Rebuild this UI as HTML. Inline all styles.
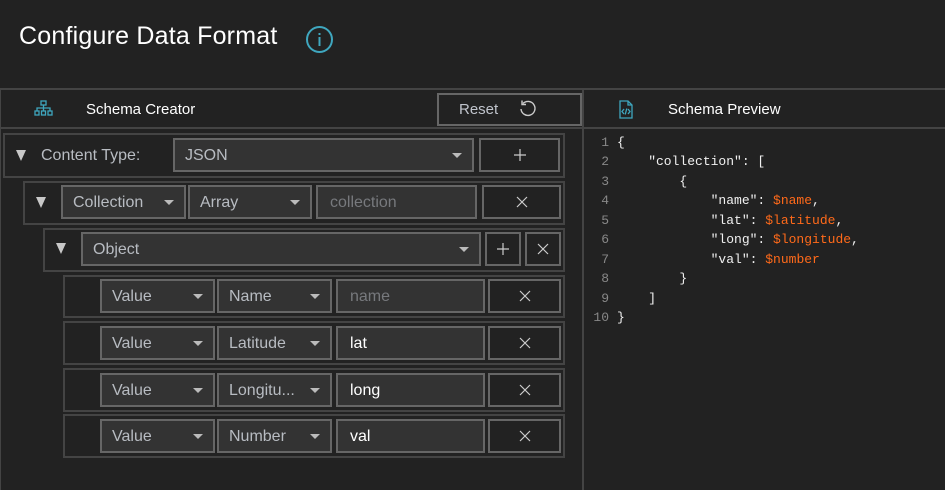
<!DOCTYPE html>
<html><head><meta charset="utf-8"><style>
*{box-sizing:border-box;margin:0;padding:0}
body{width:945px;height:490px;background:#222;overflow:hidden;position:relative;font-family:"Liberation Sans",sans-serif;color:#c4c8cc}
.a{position:absolute}
.box{position:absolute;border:2px solid #444}
.sel{position:absolute;border:2px solid #666;background:#333;font-size:16px;color:#b8bcc2;padding-left:10px;line-height:32px;white-space:nowrap;overflow:hidden}
.sel:after{content:"";position:absolute;right:10px;top:13px;border-left:5px solid transparent;border-right:5px solid transparent;border-top:5px solid #bbb}
.inp{position:absolute;border:2px solid #666;background:#333;font-size:16px;padding-left:12px;line-height:32px;color:#fff}
.btn{position:absolute;border:2px solid #666;background:#222}
.btn svg{position:absolute;left:50%;top:50%;margin-left:-7px;margin-top:-7px}
.tri{position:absolute;width:0;height:0;border-left:5.5px solid transparent;border-right:5.5px solid transparent;border-top:11px solid #c8c8c8}
.code{position:absolute;left:590px;top:133px;font-family:"Liberation Mono",monospace;font-size:13px;line-height:19.45px;color:#f0f0f0;white-space:pre}
.n{color:#888;display:inline-block;width:19px;text-align:right;margin-right:8px}
.o{color:#ff6a1a}
</style></head><body>
<div class="a" style="left:19px;top:22px;font-size:25px;color:#fff;letter-spacing:0.2px">Configure Data Format</div>
<svg class="a" style="left:305px;top:25px" width="29" height="29" viewBox="0 0 29 29"><circle cx="14.5" cy="14.5" r="12.5" fill="none" stroke="#3fa7bf" stroke-width="2"/><rect x="13.5" y="12" width="2" height="9" fill="#3fa7bf"/><rect x="13.5" y="8" width="2" height="2" fill="#3fa7bf"/></svg>
<div class="a" style="left:0;top:88px;width:945px;height:2px;background:#444"></div>
<div class="a" style="left:0;top:90px;width:1px;height:400px;background:#444"></div>
<div class="a" style="left:0;top:127px;width:945px;height:2px;background:#444"></div>
<div class="a" style="left:582px;top:90px;width:2px;height:400px;background:#444"></div>
<svg class="a" style="left:34px;top:100px" width="19" height="17" viewBox="0 0 19 17" fill="none" stroke="#3fa7bf" stroke-width="1.3"><rect x="7" y="1" width="5" height="4"/><path d="M9.5 5v3M3 11V8h13v3M9.5 8v3"/><rect x="1" y="11" width="4" height="4"/><rect x="7.5" y="11" width="4" height="4"/><rect x="14" y="11" width="4" height="4"/></svg>
<div class="a" style="left:86px;top:101px;font-size:15px;color:#fff">Schema Creator</div>
<div class="a" style="left:437px;top:93px;width:145px;height:33px;border:2px solid #666"></div>
<div class="a" style="left:459px;top:101px;font-size:15px;color:#c0c4cc">Reset</div>
<svg class="a" style="left:518px;top:99px" width="20" height="20" viewBox="0 0 20 20" fill="none" stroke="#ccc" stroke-width="1.4"><path d="M5 4.5A7 7 0 1 1 3 10"/><path d="M4 1.5v4h4"/></svg>
<svg class="a" style="left:619px;top:100px" width="14" height="19" viewBox="0 0 14 19" fill="none" stroke="#3fa7bf" stroke-width="1.3"><path d="M1 1h8l4 4v13H1z"/><path d="M9 1v4h4"/><path d="M5 9l-2 2.5 2 2.5M9 9l2 2.5-2 2.5M7.8 8.5l-1.6 6"/></svg>
<div class="a" style="left:668px;top:101px;font-size:15px;color:#fff">Schema Preview</div>

<svg width="0" height="0" style="position:absolute"><defs>
<symbol id="p" viewBox="0 0 14 14"><path d="M7 1v12M1 7h12" stroke="#ccc" stroke-width="1.2"/></symbol>
<symbol id="x" viewBox="0 0 14 14"><path d="M2 2l10 10M12 2L2 12" stroke="#ccc" stroke-width="1.2"/></symbol>
</defs></svg>

<div class="box" style="left:3px;top:133px;width:562px;height:45px"></div>
<div class="tri" style="left:16px;top:150px"></div>
<div class="a" style="left:41px;top:147px;font-size:16px;color:#b8bcc2">Content Type:</div>
<div class="sel" style="left:173px;top:138px;width:301px;height:34px">JSON</div>
<div class="btn" style="left:479px;top:138px;width:81px;height:34px"><svg width="14" height="14"><use href="#p"/></svg></div>

<div class="box" style="left:23px;top:181px;width:542px;height:44px"></div>
<div class="tri" style="left:36px;top:197px"></div>
<div class="sel" style="left:61px;top:185px;width:125px;height:34px">Collection</div>
<div class="sel" style="left:188px;top:185px;width:124px;height:34px">Array</div>
<div class="inp" style="left:316px;top:185px;width:161px;height:34px;color:#77797d">collection</div>
<div class="btn" style="left:482px;top:185px;width:79px;height:34px"><svg width="14" height="14"><use href="#x"/></svg></div>

<div class="box" style="left:43px;top:228px;width:522px;height:44px"></div>
<div class="tri" style="left:56px;top:243px"></div>
<div class="sel" style="left:81px;top:232px;width:400px;height:34px">Object</div>
<div class="btn" style="left:485px;top:232px;width:36px;height:34px"><svg width="14" height="14"><use href="#p"/></svg></div>
<div class="btn" style="left:525px;top:232px;width:36px;height:34px"><svg width="14" height="14"><use href="#x"/></svg></div>

<div class="box" style="left:63px;top:275px;width:502px;height:43px"></div>
<div class="sel" style="left:100px;top:279px;width:115px;height:34px">Value</div>
<div class="sel" style="left:217px;top:279px;width:115px;height:34px">Name</div>
<div class="inp" style="left:336px;top:279px;width:149px;height:34px;color:#77797d">name</div>
<div class="btn" style="left:488px;top:279px;width:73px;height:34px"><svg width="14" height="14"><use href="#x"/></svg></div>

<div class="box" style="left:63px;top:321px;width:502px;height:44px"></div>
<div class="sel" style="left:100px;top:326px;width:115px;height:34px">Value</div>
<div class="sel" style="left:217px;top:326px;width:115px;height:34px">Latitude</div>
<div class="inp" style="left:336px;top:326px;width:149px;height:34px">lat</div>
<div class="btn" style="left:488px;top:326px;width:73px;height:34px"><svg width="14" height="14"><use href="#x"/></svg></div>

<div class="box" style="left:63px;top:368px;width:502px;height:44px"></div>
<div class="sel" style="left:100px;top:373px;width:115px;height:34px">Value</div>
<div class="sel" style="left:217px;top:373px;width:115px;height:34px">Longitu...</div>
<div class="inp" style="left:336px;top:373px;width:149px;height:34px">long</div>
<div class="btn" style="left:488px;top:373px;width:73px;height:34px"><svg width="14" height="14"><use href="#x"/></svg></div>

<div class="box" style="left:63px;top:414px;width:502px;height:44px"></div>
<div class="sel" style="left:100px;top:419px;width:115px;height:34px">Value</div>
<div class="sel" style="left:217px;top:419px;width:115px;height:34px">Number</div>
<div class="inp" style="left:336px;top:419px;width:149px;height:34px">val</div>
<div class="btn" style="left:488px;top:419px;width:73px;height:34px"><svg width="14" height="14"><use href="#x"/></svg></div>

<div class="code"><span class="n">1</span>{
<span class="n">2</span>    "collection": [
<span class="n">3</span>        {
<span class="n">4</span>            "name": <span class="o">$name</span>,
<span class="n">5</span>            "lat": <span class="o">$latitude</span>,
<span class="n">6</span>            "long": <span class="o">$longitude</span>,
<span class="n">7</span>            "val": <span class="o">$number</span>
<span class="n">8</span>        }
<span class="n">9</span>    ]
<span class="n">10</span>}</div>
</body></html>
